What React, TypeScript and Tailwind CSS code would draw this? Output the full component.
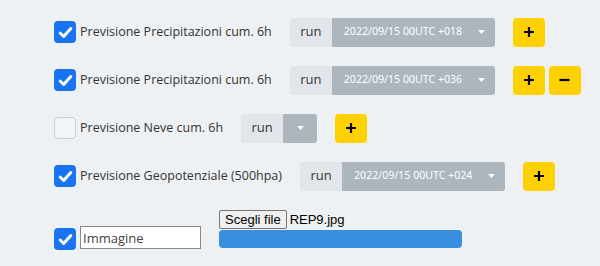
import { ReactNode } from "react";

type Row = {
  label: string;
  checked: boolean;
  value?: string;
  minus?: boolean;
};

const ROWS: Row[] = [
  { label: "Previsione Precipitazioni cum. 6h", checked: true, value: "2022/09/15 00UTC +018" },
  { label: "Previsione Precipitazioni cum. 6h", checked: true, value: "2022/09/15 00UTC +036", minus: true },
  { label: "Previsione Neve cum. 6h", checked: false },
  { label: "Previsione Geopotenziale (500hpa)", checked: true, value: "2022/09/15 00UTC +024" },
];

function Check({ checked }: { checked: boolean }) {
  if (!checked) {
    return <span className="h-[22px] w-[22px] shrink-0 rounded-[4px] border border-[#c9cdd1] bg-[#f3f4f5]" />;
  }
  return (
    <span className="grid h-[22px] w-[22px] shrink-0 place-items-center rounded-[4px] bg-[#1a73f0]">
      <svg viewBox="0 0 16 16" className="h-[17px] w-[17px]" fill="none" stroke="white" strokeWidth="2.8" strokeLinecap="round" strokeLinejoin="round">
        <path d="M3 8.5l3.3 3.3L13 4.3" />
      </svg>
    </span>
  );
}

function Caret() {
  return (
    <svg viewBox="0 0 10 6" className="h-[4px] w-[7px]" fill="white">
      <path d="M0 0h10L5 6z" />
    </svg>
  );
}

function YellowBtn({ children }: { children: ReactNode }) {
  return (
    <span className="grid h-[29px] w-[32px] place-items-center rounded-[4px] bg-[#ffd100] leading-none text-black">
      {children}
    </span>
  );
}

export default function App() {
  return (
    <div className="min-h-[266px] bg-[#eef1f3] pt-2 pl-[54px] font-['Open_Sans',sans-serif] text-[12.5px] text-[#333]">
      {ROWS.map((r, i) => (
        <div key={i} className="flex h-12 items-center">
          <Check checked={r.checked} />
          <span className="ml-[4px] mr-[18px]">{r.label}</span>
          <div className="flex h-[29px] overflow-hidden rounded-[3px]">
            <span className="grid w-[42px] place-items-center bg-[#e2e6ea] text-[13px]">run</span>
            {r.value ? (
              <span className="flex w-[163px] items-center justify-between bg-[#adb5bd] pl-3 pr-[10px] font-['Noto_Sans',sans-serif] text-[10.6px] text-white">
                {r.value}
                <Caret />
              </span>
            ) : (
              <span className="grid w-[34px] place-items-center bg-[#adb5bd]">
                <Caret />
              </span>
            )}
          </div>
          <div className="ml-[18px] flex gap-1">
            <YellowBtn>
              <svg viewBox="0 0 10 10" className="h-[10px] w-[10px]" stroke="black" strokeWidth="2.2">
                <path d="M5 0v10M0 5h10" />
              </svg>
            </YellowBtn>
            {r.minus && (
              <YellowBtn>
                <svg viewBox="0 0 10 10" className="h-[10px] w-[11px]" stroke="black" strokeWidth="2.2">
                  <path d="M0 5h10" />
                </svg>
              </YellowBtn>
            )}
          </div>
        </div>
      ))}
      <div className="mt-[10px] flex items-start">
        <span className="mt-[18px]">
          <Check checked />
        </span>
        <input
          readOnly
          value="Immagine"
          className="ml-[4px] mt-[16px] h-[23px] w-[121px] border border-[#888] bg-white px-[2px] font-['Open_Sans',sans-serif] text-[13px] text-[#444] outline-none"
        />
        <div className="ml-[18px] flex flex-col">
          <div className="flex items-center font-['Liberation_Sans',sans-serif] text-[13px] text-black">
            <span className="flex h-[19px] items-center rounded-[2px] border border-[#767676] bg-[#efefef] px-[5px]">Scegli file</span>
            <span className="ml-[3px]">REP9.jpg</span>
          </div>
          <div className="h-[18px] w-[243px] rounded-[4px] bg-[#3a8ee0]" />
        </div>
      </div>
    </div>
  );
}
